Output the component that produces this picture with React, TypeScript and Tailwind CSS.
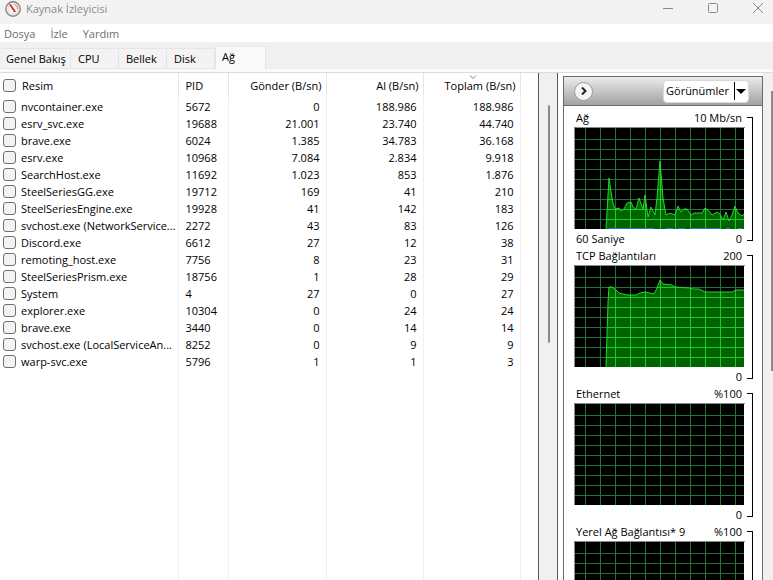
import { useId } from "react";

type Process = [name: string, pid: string, send: string, receive: string, total: string];

const processes: Process[] = [
  ["nvcontainer.exe", "5672", "0", "188.986", "188.986"],
  ["esrv_svc.exe", "19688", "21.001", "23.740", "44.740"],
  ["brave.exe", "6024", "1.385", "34.783", "36.168"],
  ["esrv.exe", "10968", "7.084", "2.834", "9.918"],
  ["SearchHost.exe", "11692", "1.023", "853", "1.876"],
  ["SteelSeriesGG.exe", "19712", "169", "41", "210"],
  ["SteelSeriesEngine.exe", "19928", "41", "142", "183"],
  ["svchost.exe (NetworkService...", "2272", "43", "83", "126"],
  ["Discord.exe", "6612", "27", "12", "38"],
  ["remoting_host.exe", "7756", "8", "23", "31"],
  ["SteelSeriesPrism.exe", "18756", "1", "28", "29"],
  ["System", "4", "27", "0", "27"],
  ["explorer.exe", "10304", "0", "24", "24"],
  ["brave.exe", "3440", "0", "14", "14"],
  ["svchost.exe (LocalServiceAn...", "8252", "0", "9", "9"],
  ["warp-svc.exe", "5796", "1", "1", "3"],
];

const tabs = [
  { label: "Genel Bakış", width: "w-[69px]" },
  { label: "CPU", width: "w-12" },
  { label: "Bellek", width: "w-12" },
  { label: "Disk", width: "w-12" },
  { label: "Ağ", width: "w-[51px]" },
];

const networkLine =
  "32,102 35,51 37,65 39,76 41,82 45,81 47,84 50,82 53,76 57,75 59,80 62,82 65,71 69,82 71,68 74,90 77,80 81,88 83,71 86,34 89,71 92,88 96,86 101,88 104,79 107,85 110,82 113,82 117,88 120,86 128,86 131,81 134,83 138,88 143,85 146,87 149,93 152,85 155,94 158,88 161,79 164,86 168,89 170,87";
const tcpLine =
  "32,102 34,37 35,22 38,22 41,24 45,28 53,30 62,30 66,28 71,27 80,29 83,23 86,15 89,19 98,20 101,22 116,23 119,24 125,24 131,27 159,27 161,25 170,25";
const utilisation = "M35 101.5H80M92 101.5H99M104 101.5H111M116 101.5H146M152 101.5H156M164 101.5H168";

const gridPath =
  Array.from({ length: 11 }, (_, i) => `M${11.5 + i * 15} 0V102`).join("") +
  Array.from({ length: 9 }, (_, i) => `M0 ${12.5 + i * 10}H170`).join("");

function Chart({ line, blue }: { line?: string; blue?: string }) {
  const clipId = useId();
  const area = line ? `${line} 170,102` : "";
  return (
    <svg viewBox="0 0 171 102" className="block h-[102px] w-[171px]" aria-hidden="true">
      <rect width="170" height="102" fill="#000" />
      <path d={gridPath} stroke="#1f7533" shapeRendering="crispEdges" />
      {line && (
        <>
          <clipPath id={clipId}>
            <polygon points={area} />
          </clipPath>
          <polygon points={area} fill="#006400" />
          <path d={gridPath} stroke="#22c832" shapeRendering="crispEdges" clipPath={`url(#${clipId})`} />
          <polyline points={line} fill="none" stroke="#22d82c" />
        </>
      )}
      {blue && <path d={blue} stroke="#3f6fd8" />}
      <path d="M0.5 102V0.5H171" fill="none" stroke="#8a8a8a" />
    </svg>
  );
}

interface GraphProps {
  title: string;
  max: string;
  min?: string;
  caption?: string;
  line?: string;
  blue?: string;
}

function Graph({ title, max, min, caption, line, blue }: GraphProps) {
  return (
    <section className="flex h-[138px] shrink-0 gap-[2px] pl-[10px]">
      <div className="w-[171px]">
        <div className="flex h-[17px] items-start justify-between pr-[3px] pl-[2px]">
          <h2>{title}</h2>
          <span>{max}</span>
        </div>
        <Chart line={line} blue={blue} />
        {min && (
          <div className="flex h-[19px] items-center justify-between pr-[3px] pl-[2px]">
            <span>{caption}</span>
            <span>{min}</span>
          </div>
        )}
      </div>
      <div className="my-[7px] w-[6px] border-y border-r border-black" />
    </section>
  );
}

function Check({ label }: { label: string }) {
  return (
    <input
      type="checkbox"
      aria-label={label}
      className="block size-[13px] shrink-0 appearance-none rounded-[3px] border border-[#707070] bg-[#f3f3f3]"
    />
  );
}

export default function App() {
  return (
    <div className="flex h-screen flex-col overflow-hidden bg-[#f0f0f0] font-['Open_Sans','Noto_Sans',sans-serif] text-[11px] leading-4 text-black">
      <header className="flex h-6 shrink-0 items-start justify-between bg-[#f3f3f3] text-[#8a8a8a]">
        <div className="flex items-center gap-[5px] pl-[5px]">
          <svg viewBox="0 0 16 16" className="size-4" aria-hidden="true">
            <circle cx="8" cy="8" r="7.200" fill="#f8f4f2" stroke="#8a8585" strokeWidth="1.400" />
            <circle cx="8" cy="8" r="5.200" fill="none" stroke="#e2d9d4" />
            <path d="M9.500 3.500A5 5 0 0 1 12.500 8.500" fill="none" stroke="#e0a070" strokeWidth="1.200" />
            <path d="M4.500 3.500L5.500 3.500L10.500 10.500L9.500 11Z" fill="#c81e1e" stroke="#c81e1e" strokeWidth="0.800" />
          </svg>
          <h1 className="pt-px">Kaynak İzleyicisi</h1>
        </div>
        <div className="flex gap-[35px] pt-[3px] pr-[10px]">
          <button aria-label="Simge durumuna küçült">
            <svg viewBox="0 0 10 10" className="size-[10px]" fill="none" stroke="#8a8a8a">
              <path d="M0 5.500H10" />
            </svg>
          </button>
          <button aria-label="Ekranı kapla">
            <svg viewBox="0 0 10 10" className="size-[10px]" fill="none" stroke="#8a8a8a">
              <rect x="0.5" y="0.5" width="9" height="9" rx="1" />
            </svg>
          </button>
          <button aria-label="Kapat">
            <svg viewBox="0 0 10 10" className="size-[10px]" fill="none" stroke="#8a8a8a">
              <path d="M0 0L10 10M10 0L0 10" />
            </svg>
          </button>
        </div>
      </header>

      <nav className="flex h-[18px] shrink-0 items-end gap-[15px] bg-white pl-1 text-[#6d6d6d]">
        <button>Dosya</button>
        <button>İzle</button>
        <button>Yardım</button>
      </nav>

      <div role="tablist" className="flex h-[27px] shrink-0 items-end pl-[2px]">
        {tabs.map(({ label, width }) =>
          label === "Ağ" ? (
            <button
              key={label}
              role="tab"
              aria-selected="true"
              className={`${width} h-[23px] border border-b-0 border-[#e5e5e5] bg-[#f9f9f9] pb-[2px] pl-[6px] text-left`}
            >
              {label}
            </button>
          ) : (
            <button
              key={label}
              role="tab"
              aria-selected="false"
              className={`${width} h-[21px] border border-l-0 border-[#e5e5e5] bg-[#f3f3f3] pl-[7px] text-left whitespace-nowrap first:pl-1`}
            >
              {label}
            </button>
          ),
        )}
      </div>
      <div className="h-1 shrink-0 border-b border-[#dcdcdc] bg-[#f9f9f9]" />

      <main className="flex min-h-0 flex-1">
        <div className="min-w-0 flex-1 overflow-hidden bg-white">
          <table className="h-full w-[520px] table-fixed border-collapse">
            <colgroup>
              <col className="w-[178px]" />
              <col className="w-[50px]" />
              <col className="w-[98px]" />
              <col className="w-[97px]" />
              <col className="w-[97px]" />
            </colgroup>
            <thead>
              <tr className="h-[25px] *:border-r *:border-[#e5e5e5] *:p-0 *:font-normal">
                <th className="text-left">
                  <label className="flex items-center gap-[6px] pl-[3px]">
                    <Check label="Tümünü seç" />
                    Resim
                  </label>
                </th>
                <th className="text-left">
                  <span className="pl-[7px]">PID</span>
                </th>
                <th className="text-right">
                  <span className="pr-1">Gönder (B/sn)</span>
                </th>
                <th className="text-right">
                  <span className="pr-1">Al (B/sn)</span>
                </th>
                <th className="relative text-right">
                  <svg
                    viewBox="0 0 8 5"
                    className="absolute top-[2px] left-[45px] h-[5px] w-2"
                    fill="none"
                    stroke="#808080"
                    aria-hidden="true"
                  >
                    <path d="M1 0.500L4 3.500L7 0.500" />
                  </svg>
                  <span className="pr-1">Toplam (B/sn)</span>
                </th>
              </tr>
            </thead>
            <tbody>
              {processes.map(([name, pid, send, receive, total]) => (
                <tr key={pid} className="h-[17px] *:border-r *:border-[#f0f0f0] *:p-0">
                  <td>
                    <label className="flex items-center gap-[5px] pl-[3px] whitespace-nowrap">
                      <Check label={name} />
                      {name}
                    </label>
                  </td>
                  <td>
                    <span className="pl-[7px]">{pid}</span>
                  </td>
                  <td className="text-right">
                    <span className="pr-[6px]">{send}</span>
                  </td>
                  <td className="text-right">
                    <span className="pr-[6px]">{receive}</span>
                  </td>
                  <td className="text-right">
                    <span className="pr-[6px]">{total}</span>
                  </td>
                </tr>
              ))}
              <tr className="*:border-r *:border-[#f0f0f0]" aria-hidden="true">
                <td />
                <td />
                <td />
                <td />
                <td />
              </tr>
            </tbody>
          </table>
        </div>

        <div className="w-5 shrink-0 border-x border-[#5a5a5a] pt-8">
          <div className="ml-[9px] h-[238px] w-[2px] rounded-full bg-[#8a8a8a]" />
        </div>

        <aside className="flex w-[205px] shrink-0 flex-col bg-white pt-[3px] pl-[5px]">
          <div className="flex min-h-0 flex-1 flex-col border border-b-0 border-[#6a6a6a]">
            <div className="flex h-[29px] shrink-0 items-center justify-between border-b border-[#6a6a6a] bg-linear-to-b from-[#ececec] to-[#a2a2a2] pr-[13px] pl-[10px]">
              <button
                aria-label="Daralt"
                className="flex size-[19px] items-center justify-center rounded-full border border-[#9a9a9a] bg-[#f4f4f4]"
              >
                <svg viewBox="0 0 8 8" className="size-2" fill="none" stroke="#222" strokeWidth="2">
                  <path d="M2 0.500L5.500 4L2 7.500" />
                </svg>
              </button>
              <button className="flex h-[23px] items-center rounded-[4px] border border-[#d8d8d8] bg-white px-[2px]">
                Görünümler
                <span className="ml-[5px] h-[18px] w-px bg-black" />
                <svg viewBox="0 0 10 5" className="ml-px h-[5px] w-[10px]" aria-hidden="true">
                  <path d="M0 0H10L5 5Z" fill="#000" />
                </svg>
              </button>
            </div>
            <div className="flex min-h-0 flex-1 flex-col overflow-hidden pt-1">
              <Graph title="Ağ" max="10 Mb/sn" min="0" caption="60 Saniye" line={networkLine} blue={utilisation} />
              <Graph title="TCP Bağlantıları" max="200" min="0" line={tcpLine} />
              <Graph title="Ethernet" max="%100" min="0" />
              <Graph title="Yerel Ağ Bağlantısı* 9" max="%100" />
            </div>
          </div>
        </aside>

        <div className="flex w-[10px] shrink-0 justify-end pt-[18px]">
          <div className="h-[280px] w-[2px] bg-[#8a8a8a]" />
        </div>
      </main>
    </div>
  );
}
